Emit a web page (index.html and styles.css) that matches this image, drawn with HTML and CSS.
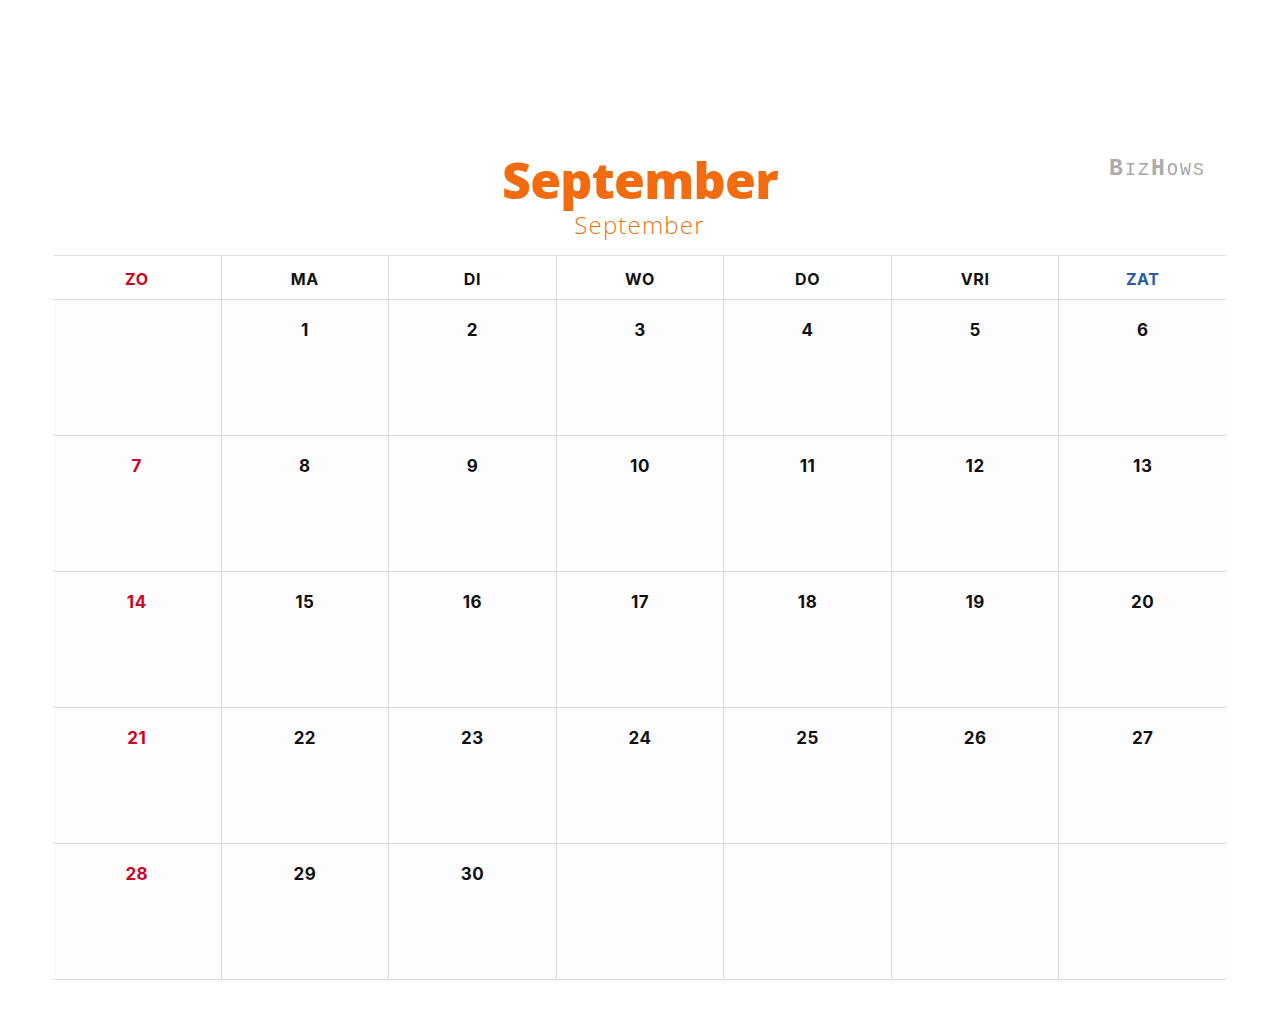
FILE: index.html
```html
<!DOCTYPE html>
<html lang="nl">
<head>
<meta charset="utf-8">
<title>September</title>
<link rel="stylesheet" href="styles.css">
</head>
<body>
<div class="page">
  <header class="top">
    <div class="spacer"></div>
    <div class="titles">
      <div class="title">September</div>
      <div class="subtitle">September</div>
    </div>
    <div class="logo"><span class="big">B</span>IZ<span class="big">H</span>OWS</div>
  </header>
  <div class="cal">
    <div class="hd sun">ZO</div>
    <div class="hd">MA</div>
    <div class="hd">DI</div>
    <div class="hd">WO</div>
    <div class="hd">DO</div>
    <div class="hd">VRI</div>
    <div class="hd sat">ZAT</div>

    <div class="cell"></div>
    <div class="cell"><span>1</span></div>
    <div class="cell"><span>2</span></div>
    <div class="cell"><span>3</span></div>
    <div class="cell"><span>4</span></div>
    <div class="cell"><span>5</span></div>
    <div class="cell"><span>6</span></div>

    <div class="cell sun"><span>7</span></div>
    <div class="cell"><span>8</span></div>
    <div class="cell"><span>9</span></div>
    <div class="cell"><span>10</span></div>
    <div class="cell"><span>11</span></div>
    <div class="cell"><span>12</span></div>
    <div class="cell"><span>13</span></div>

    <div class="cell sun"><span>14</span></div>
    <div class="cell"><span>15</span></div>
    <div class="cell"><span>16</span></div>
    <div class="cell"><span>17</span></div>
    <div class="cell"><span>18</span></div>
    <div class="cell"><span>19</span></div>
    <div class="cell"><span>20</span></div>

    <div class="cell sun"><span>21</span></div>
    <div class="cell"><span>22</span></div>
    <div class="cell"><span>23</span></div>
    <div class="cell"><span>24</span></div>
    <div class="cell"><span>25</span></div>
    <div class="cell"><span>26</span></div>
    <div class="cell"><span>27</span></div>

    <div class="cell sun"><span>28</span></div>
    <div class="cell"><span>29</span></div>
    <div class="cell"><span>30</span></div>
    <div class="cell"></div>
    <div class="cell"></div>
    <div class="cell"></div>
    <div class="cell"></div>
  </div>
</div>
</body>
</html>
```
FILE: styles.css
```css
html, body {
  margin: 0;
  padding: 0;
  background: #ffffff;
}
body {
  font-family: "Inter", "Liberation Sans", sans-serif;
  color: #111;
}
.page {
  width: 1280px;
  height: 1031px;
  padding: 0 54px 0 53px;
  box-sizing: border-box;
}
.top {
  height: 255px;
  display: grid;
  grid-template-columns: 1fr auto 1fr;
  align-items: start;
}
.titles {
  padding-top: 151px;
  display: flex;
  flex-direction: column;
  align-items: center;
}
.title {
  font-family: "Open Sans", sans-serif;
  font-weight: 800;
  font-size: 50px;
  line-height: 58px;
  letter-spacing: -0.7px;
  color: #f26b0f;
  margin-left: 1px;
}
.subtitle {
  font-family: "Open Sans", sans-serif;
  font-weight: 300;
  font-size: 24px;
  line-height: 28px;
  color: #f0720f;
  margin-top: 2px;
  letter-spacing: 1.2px;
}
.logo {
  justify-self: end;
  margin-top: 156px;
  margin-right: 20px;
  font-family: "Liberation Mono", monospace;
  font-size: 18px;
  color: #a6a6a6;
  letter-spacing: 2.2px;
}
.logo .big {
  font-size: 23px;
  font-weight: 700;
  color: #acacac;
}
.cal {
  display: grid;
  grid-template-columns: repeat(7, 1fr);
  grid-template-rows: 44px repeat(5, 136px);
  border-top: 1px solid #e2dee6;
  background: #fdfcfe;
}
.hd {
  display: flex;
  align-items: center;
  justify-content: center;
  font-weight: 700;
  font-size: 16px;
  letter-spacing: 0.6px;
  color: #111;
  border-bottom: 1px solid #dcd8e0;
  border-left: 1px solid #dcd8e0;
  background: #fff;
  padding-top: 2px;
  box-sizing: border-box;
}
.hd:nth-child(7n+1) { border-left: none; }
.hd.sun { color: #d0021b; }
.hd.sat { color: #2b5ca6; }
.cell {
  border-bottom: 1px solid #dcd8e0;
  border-left: 1px solid #dcd8e0;
  display: flex;
  justify-content: center;
  padding-top: 18px;
  box-sizing: border-box;
  font-weight: 700;
  font-size: 17px;
  letter-spacing: 0.5px;
  color: #111;
}
.cal > .cell:nth-child(7n+1) { border-left: none; }
.cell span { line-height: 24px; }
.cell.sun { color: #d0021b; }
```
